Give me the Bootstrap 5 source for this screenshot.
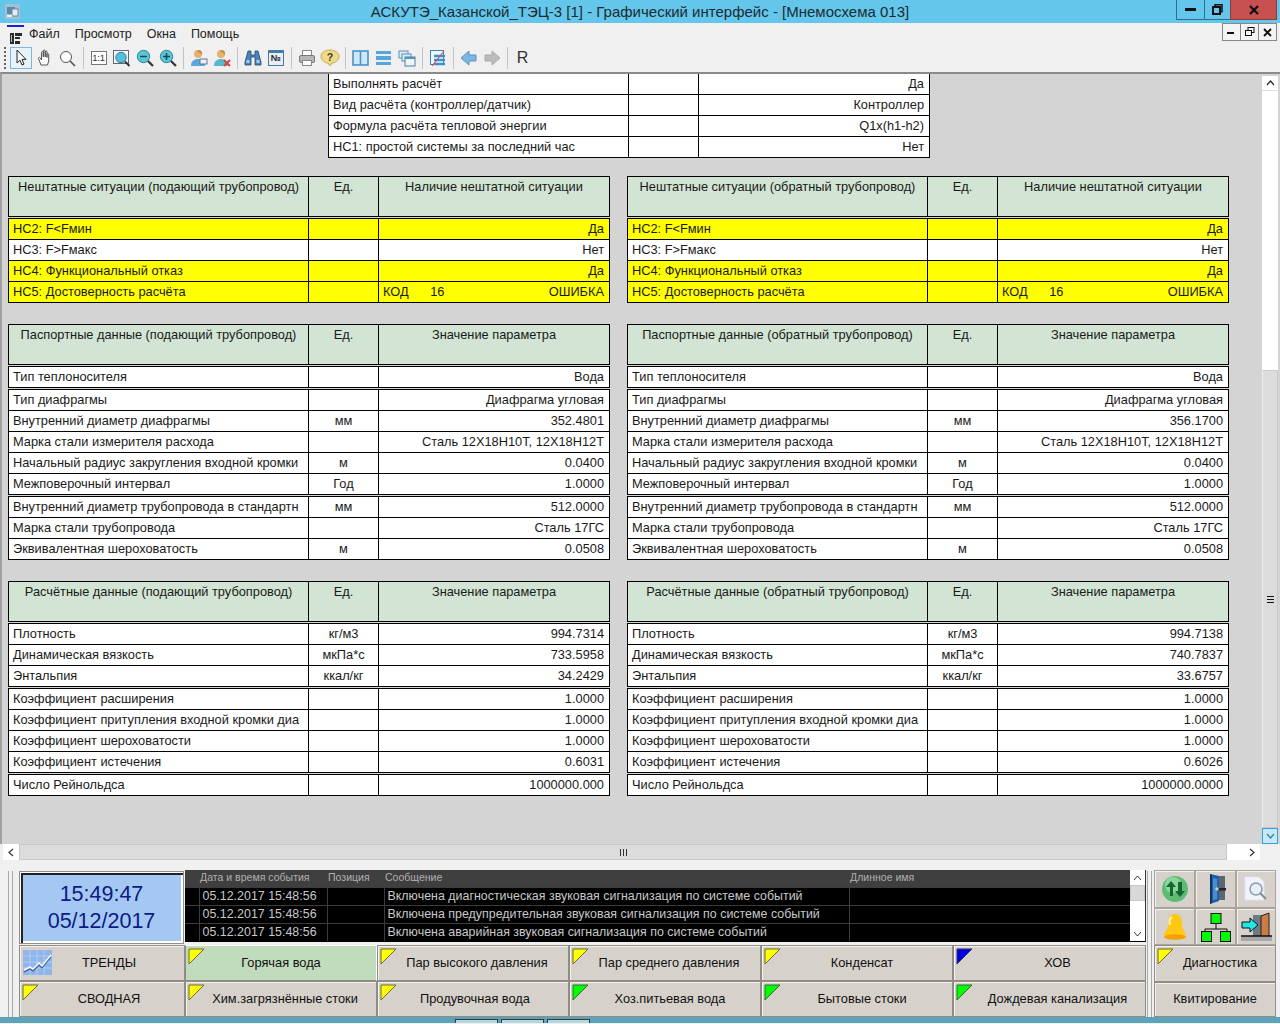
<!DOCTYPE html>
<html lang="ru"><head><meta charset="utf-8"><title>АСКУТЭ</title>
<link rel="stylesheet" href="https://cdn.jsdelivr.net/npm/bootstrap@5.3.0/dist/css/bootstrap.min.css">
<style>
html,body{margin:0;height:1024px;overflow:hidden;background:#f0f0f0;font-family:"Liberation Sans",Arial,sans-serif;color:#111}
.titlebar{height:23px;background:#63c6ea;position:relative;font-size:15px;line-height:23px;text-align:center;color:#1c2b33}
.appicon{position:absolute;left:4px;top:3px}
.capbtns{position:absolute;top:0;right:3px;display:flex;height:20px}
.capbtns div{border:1px solid #2c6f8a;border-top:0;display:flex;align-items:center;justify-content:center;margin-left:-1px}
.cap-min{width:29px}.cap-res{width:27px}.cap-close{width:47px;background:#c75050;border-color:#8d3a3a!important}
.menubar{height:21px;font-size:12.5px;position:relative;line-height:20px}
.menu-ico{width:17px;margin:0 5px 0 7px;border-top:2px solid #1f1fd8;height:18px;margin-top:1px;padding-left:2px}
.menu-item{margin-right:15px;color:#222}
.mdibtns{position:absolute;right:3px;top:0;display:flex}
.mdibtns div{width:19px;height:18px;border:1px solid #888;background:#f4f4f4;margin-left:-1px;display:flex;align-items:center;justify-content:center}
.toolbar{height:28px;padding-left:4px;align-items:center}
.grip{width:5px;height:22px;margin-right:1px;border-left:2px dotted #666}
.tb{width:23px;height:22px;display:flex;align-items:center;justify-content:center;flex:none}
.tb.on{width:22px;margin-right:1px;border:1px solid #7fb6e0;background:#e8f4fb}
.sep{width:8px;height:22px;position:relative;flex:none}
.sep::after{content:"";display:block;width:1px;height:22px;margin-left:4px;background:#c4c4c4}
.tb-r{font-size:16px;color:#333}
.box11{font-size:9.5px;line-height:12px;border:1px solid #777;width:16px;height:14px;text-align:center;background:#fff;color:#333;letter-spacing:-.3px}
.no-box{font-size:9px;line-height:10px;border:1px solid #4a78a8;border-top:3px solid #4a78a8;width:16px;height:16px;text-align:center;background:#e7eef5;color:#223;font-weight:700}
.work{height:772px;border-top:2px solid #8a8a8a;border-left:2px solid #a0a0a0;background:#d4d4d4;overflow:hidden;position:relative;display:flex}
.canvas{width:1260px;flex:none;padding-left:6px;overflow:hidden}
.vbar{width:16px;height:100%;flex:none;display:flex;flex-direction:column;margin-top:2px}
.vup{height:15px;background:#fff;border-bottom:1px solid #ddd;display:flex;align-items:center;justify-content:center}
.vfree{height:279px;background:#fff}
.vthumb{flex:1;background:#dcdcdc;border:1px solid #c8c8c8;border-left-color:#eee;display:flex;align-items:center;justify-content:center;font-size:0}
.vdn{height:16px;background:#c7e8f8;border:1px solid #3c9ed6;display:flex;align-items:center;justify-content:center;margin-bottom:2px}
.bars3{width:7px;height:7px;border-top:1px solid #111;border-bottom:1px solid #111;position:relative}
.bars3::after{content:"";position:absolute;left:0;right:0;top:2px;height:1px;background:#111;box-shadow:0 0 0 #111}
.hbar{height:17px;display:flex;border-top:1px solid #a0a0a0;padding-left:3px;background:#f0f0f0;margin-top:-1px}
.hbtn{width:16px;background:#fff;display:flex;align-items:center;justify-content:center}
.hthumb{width:1208px;background:#dcdcdc;border:1px solid #c8c8c8;display:flex;align-items:center;justify-content:center}
.hfree{width:17px;background:#fff}
.bars3v{width:7px;height:7px;border-left:1px solid #333;border-right:1px solid #333;position:relative}
.bars3v::after{content:"";position:absolute;top:0;bottom:0;left:2px;width:1px;background:#333}
.pair{display:flex;gap:18px}
.pair+.pair{margin-top:21px}
.top-table{margin:-1px 0 18px 320px;width:601px}
.block{width:601px;flex:none}
table.g{width:601px;table-layout:fixed;border-collapse:collapse;margin:0;font-size:12.8px;color:#1a1a1a}
table.g+table.g{margin-top:1px}
table.g>tbody>tr>td{border:1px solid #000;height:21px;padding:0 5px 0 4px;line-height:19px;background:#fff;white-space:nowrap;overflow:hidden;color:#1a1a1a;box-shadow:none}
table.g>tbody>tr>td:nth-child(2){text-align:center;padding:0}
table.g>tbody>tr>td:nth-child(3){text-align:right}
table.g.head>tbody>tr>td{height:40px;background:#d2e4d3;text-align:center!important;padding:0;font-size:12.8px}
table.g>tbody>tr.warn>td{background:#ff0}
.c1{width:300px}.c2{width:70px}.c3{width:231px}
.kod{display:flex;justify-content:space-between}
.kod b{font-weight:400;word-spacing:18px}
.bottom{height:157px;display:flex;padding-top:10px;background:#f0f0f0}
.gr2{width:7px;height:146px;border-left:1px solid #a8a8a8;border-right:1px solid #a8a8a8;flex:none}
.gr-l{margin:1px 6px 0 8px;width:5px}
.gr-r{margin:1px 2px 0 1px;width:5px}
.mid{width:1127px;flex:none}
.toprow{height:75px;display:flex}
.clock{width:165px;height:73px;margin:1px 1px 0 0;border:1px solid #8f8f8f;background:#a5c8f2;box-shadow:inset 1px 1px 0 #fff,inset 3px 3px 0 #222,inset -2px -2px 0 #fff;color:#0b1a84;font-size:21.5px;text-align:center;line-height:27px;padding-top:9px}
.events{width:961px;height:72px;background:#000;position:relative;overflow:hidden}
.ev-scroll{position:absolute;right:0;top:0;width:16px;height:72px;display:flex;flex-direction:column;background:#fff;border-bottom:1px solid #000;border-right:1px solid #333}
.ev-scroll .u{height:15px;display:flex;align-items:center;justify-content:center;background:#fff}
.ev-scroll .t{height:16px;background:#d8d8d8;border:1px solid #c8c8c8}
.ev-scroll .f{height:25px}
table.ev{width:945px;table-layout:fixed;border-collapse:collapse;margin:0;font-size:12.4px;letter-spacing:.02px}
table.ev>tbody>tr>td{background:#000;color:#c9c9c9;height:18px;padding:0 0 0 3px;border:0;border-left:1px solid #3c3c3c;border-top:1px solid #3c3c3c;line-height:16px;white-space:nowrap;overflow:hidden;box-shadow:none}
table.ev>tbody>tr>td:first-child{border-left:0}
table.ev>tbody>tr.h>td{background:#3f3f3f;color:#b0b0b0;font-size:10.5px;height:17px;border:0;padding-left:1px;line-height:14px}
.btn.pb{--bs-btn-padding-y:0;--bs-btn-padding-x:0;--bs-btn-border-radius:0;--bs-btn-font-size:12.8px;position:relative;background:#d6d2cb;color:#111;border:1px solid #8f8c86;border-radius:0;box-shadow:inset 1px 1px 0 #f4f2ee;display:flex;align-items:center;justify-content:center;font-family:inherit;line-height:1;white-space:nowrap}
.btn.pb.act{background:#c1dbbd;box-shadow:none;border-color:#fff #fff #8f8c86 #8f8c86}
.s2{padding-left:4px!important}.s4{padding-left:8px!important}.s10{padding-left:10px!important}.s14{padding-left:14px!important}.s16{padding-left:16px!important}
.pb-grid{display:grid;grid-template-columns:166px 192px 192px 192px 192px 193px;grid-template-rows:36px 36px;margin-top:0}
.tri{position:absolute;left:2px;top:2px}
.trend{position:absolute;left:3px;top:4px}
.right{width:122px;flex:none}
.ic-grid{display:grid;grid-template-columns:41px 41px 40px;grid-template-rows:38px 37px}
.ic{background:#d6d2cb;border:1px solid #a8a59f;box-shadow:inset 1px 1px 0 #f4f2ee;display:flex;align-items:center;justify-content:center}
.r-btns{display:grid;grid-template-rows:37px 35px}
.taskbar{height:6px;background:#5da3b8;display:flex;padding:2px 0 0 455px;gap:3px}
.taskbar div{width:43px;height:4px;background:#b7d6de;border:1px solid #2e3e44;border-bottom:0}
</style></head><body>
<div class="titlebar">
<svg class="appicon" width="17" height="17" viewBox="0 0 17 17"><rect x="1" y="1" width="15" height="15" fill="#9fc3d6"/><rect x="3" y="4" width="8" height="7" fill="#5c87a8"/><rect x="8" y="6" width="6" height="7" fill="#e4eef2" stroke="#6b8aa0"/><rect x="3" y="12" width="5" height="2" fill="#eef4f6"/></svg>
АСКУТЭ_Казанской_ТЭЦ-3 [1] - Графический интерфейс - [Мнемосхема 013]
<div class="capbtns">
<div class="cap-min"><svg width="11" height="5"><rect y="1" width="11" height="3" fill="#111"/></svg></div>
<div class="cap-res"><svg width="11" height="11"><rect x="3" y=".75" width="7" height="7" fill="none" stroke="#111" stroke-width="1.5"/><rect x="1" y="3" width="7" height="7" fill="#63c6ea" stroke="#111" stroke-width="2"/></svg></div>
<div class="cap-close"><svg width="10" height="10"><path d="M1 1l8 8M9 1l-8 8" stroke="#111" stroke-width="2.4"/></svg></div>
</div></div>

<div class="menubar d-flex align-items-center">
<div class="menu-ico"><svg width="14" height="14" viewBox="0 0 14 14"><path d="M1 2h4v11H1zM6 2h7v3H6zM6 6h5v2H6zM6 10h5v3H6z" fill="#2a2a2a"/><path d="M2.5 4v7" stroke="#bbb"/></svg></div>
<span class="menu-item">Файл</span><span class="menu-item">Просмотр</span><span class="menu-item">Окна</span><span class="menu-item">Помощь</span>
<div class="mdibtns">
<div><svg width="9" height="5"><rect y="2" width="7" height="2" fill="#111"/></svg></div>
<div><svg width="10" height="10"><rect x="3" y=".5" width="6" height="5" fill="none" stroke="#111"/><rect x=".5" y="3.5" width="6" height="5" fill="#f4f4f4" stroke="#111"/></svg></div>
<div><svg width="9" height="9"><path d="M1 1l7 7M8 1l-7 7" stroke="#111" stroke-width="1.8"/></svg></div>
</div></div>

<div class="toolbar d-flex">
<div class="grip"></div>
<div class="tb on"><svg width="14" height="18" viewBox="0 0 14 18"><path d="M3 1v13l3-2.8 2 4.8 2-.9-2-4.700h4z" fill="#fff" stroke="#222"/></svg></div>
<div class="tb"><svg width="16" height="18" viewBox="0 0 16 18"><path d="M4 16L1.500 9.500c-.3-1.200 1.200-1.500 1.800-.5L4.500 11V3.500c0-1.300 1.800-1.300 1.800 0V8V2c0-1.300 1.900-1.300 1.900 0v6-5c0-1.300 1.800-1.300 1.800 0v5.500-3c0-1.200 1.700-1.200 1.700 0V12l-1.200 4z" fill="#fff" stroke="#444" stroke-width=".9"/></svg></div>
<div class="tb"><svg width="17" height="17" viewBox="0 0 17 17"><circle cx="7" cy="7" r="5.500" fill="#fff" stroke="#555"/><path d="M11 11l5 5" stroke="#555" stroke-width="1.700"/></svg></div>
<div class="sep"></div>
<div class="tb"><div class="box11">1:1</div></div>
<div class="tb"><svg width="18" height="17" viewBox="0 0 18 17"><rect x=".5" y=".5" width="15" height="13" fill="#f4f8fb" stroke="#667"/><circle cx="8" cy="7.500" r="5.200" fill="#55c0dc" stroke="#2e7f98"/><path d="M12 11.500l4.500 4.500" stroke="#333" stroke-width="2"/></svg></div>
<div class="tb"><svg width="18" height="18" viewBox="0 0 18 18"><circle cx="7.500" cy="7.500" r="6.200" fill="#5cc3d8" stroke="#2b8a9a"/><path d="M4 7.500h7" stroke="#124a58" stroke-width="1.500"/><path d="M12 12l5 5" stroke="#333" stroke-width="2.200"/></svg></div>
<div class="tb"><svg width="18" height="18" viewBox="0 0 18 18"><circle cx="7.500" cy="7.500" r="6.200" fill="#5cc3d8" stroke="#2b8a9a"/><path d="M4 7.500h7M7.500 4v7" stroke="#124a58" stroke-width="1.500"/><path d="M12 12l5 5" stroke="#333" stroke-width="2.200"/></svg></div>
<div class="sep"></div>
<div class="tb"><svg width="18" height="18" viewBox="0 0 18 18"><circle cx="8" cy="5" r="4" fill="#e8b070"/><path d="M7 1.500c3-1.300 6 1 5 4-2-2-4-2-5-4z" fill="#c08a40"/><path d="M1 17c0-5 3-7 7-7s7 2 7 7z" fill="#58a8dc"/><rect x="10" y="10" width="7" height="5" fill="#eef" stroke="#678"/></svg></div>
<div class="tb"><svg width="18" height="18" viewBox="0 0 18 18"><circle cx="8" cy="5" r="4" fill="#e8b070"/><path d="M7 1.500c3-1.300 6 1 5 4-2-2-4-2-5-4z" fill="#c08a40"/><path d="M1 17c0-5 3-7 7-7s7 2 7 7z" fill="#58b8cc"/><path d="M11 11l6 6M17 11l-6 6" stroke="#cc4a3a" stroke-width="2"/></svg></div>
<div class="sep"></div>
<div class="tb"><svg width="18" height="16" viewBox="0 0 18 16"><path d="M4 1h3v4h4V1h3l3 11v3h-6V7H7v8H1v-3z" fill="#4a83b8" stroke="#23496e" stroke-width=".8"/><rect x="2.500" y="10" width="3" height="3" fill="#a8d0ee"/><rect x="12.500" y="10" width="3" height="3" fill="#a8d0ee"/></svg></div>
<div class="tb"><div class="no-box">№</div></div>
<div class="sep"></div>
<div class="tb"><svg width="18" height="18" viewBox="0 0 18 18"><rect x="4.500" y="1.500" width="9" height="6" fill="#fff" stroke="#888"/><rect x="1.500" y="6.500" width="15" height="7" rx="1.500" fill="#b4b8bc" stroke="#777"/><rect x="4.500" y="11.500" width="9" height="5" fill="#fff" stroke="#888"/></svg></div>
<div class="tb"><svg width="20" height="18" viewBox="0 0 20 18"><path d="M10 1c5 0 9 2.500 9 6.500S15 14 12 14l-2 3-2-3c-3 0-7-2.500-7-6.500S5 1 10 1z" fill="#f1d98a" stroke="#c7a95a"/><text x="10" y="11.500" font-size="10.500" font-weight="700" text-anchor="middle" fill="#3d3d28" font-family="Liberation Sans">?</text></svg></div>
<div class="sep"></div>
<div class="tb"><svg width="17" height="16" viewBox="0 0 17 16"><rect x="1" y="1" width="15" height="14" fill="#cfe6f6" stroke="#4a93c8" stroke-width="1.600"/><path d="M8.500 1v14" stroke="#4a93c8" stroke-width="1.600"/></svg></div>
<div class="tb"><svg width="17" height="16" viewBox="0 0 17 16"><rect x="1" y="1" width="15" height="3" fill="#5ba4d6"/><rect x="1" y="6" width="15" height="4" fill="#5ba4d6"/><rect x="1" y="12" width="15" height="3" fill="#5ba4d6"/><rect x="1" y="4" width="15" height="2" fill="#e4f1fa"/><rect x="1" y="10" width="15" height="2" fill="#e4f1fa"/></svg></div>
<div class="tb"><svg width="18" height="17" viewBox="0 0 18 17"><rect x="1" y="1" width="9" height="7" fill="#dcecf6" stroke="#5a8fb8"/><rect x="4" y="4" width="9" height="7" fill="#dcecf6" stroke="#5a8fb8"/><rect x="7" y="7" width="10" height="9" fill="#eef6fb" stroke="#4a7fa8"/><rect x="7" y="7" width="10" height="2" fill="#5a8fb8"/></svg></div>
<div class="sep"></div>
<div class="tb"><svg width="18" height="18" viewBox="0 0 18 18"><rect x="1.500" y="1.500" width="13" height="14" fill="#eef6fb" stroke="#4a7fa8"/><path d="M5 7h11M5 11h11M5 15h11" stroke="#3c8fd0" stroke-width="2.400"/><path d="M3 17L15 2" stroke="#c65a4a" stroke-width="1.200"/></svg></div>
<div class="sep"></div>
<div class="tb"><svg width="18" height="16" viewBox="0 0 18 16"><path d="M9 1L1 8l8 7v-4h7V5H9z" fill="#7cb6e4" stroke="#5a93c4"/></svg></div>
<div class="tb"><svg width="18" height="16" viewBox="0 0 18 16"><path d="M9 1l8 7-8 7v-4H2V5h7z" fill="#bcbcb8" stroke="#a8a8a4"/></svg></div>
<div class="sep"></div>
<div class="tb tb-r">R</div>
</div>

<div class="work">
<div class="canvas">
<div class="top-table"><table class="g table"><colgroup><col class="c1"><col class="c2"><col class="c3"></colgroup><tbody>
<tr><td>Выполнять расчёт</td><td></td><td>Да</td></tr>
<tr><td>Вид расчёта (контроллер/датчик)</td><td></td><td>Контроллер</td></tr>
<tr><td>Формула расчёта тепловой энергии</td><td></td><td>Q1x(h1-h2)</td></tr>
<tr><td>НС1: простой системы за последний час</td><td></td><td>Нет</td></tr>
</tbody></table></div>

<div class="pair">
<div class="block">
<table class="g head table"><colgroup><col class="c1"><col class="c2"><col class="c3"></colgroup><tbody><tr><td>Нештатные ситуации (подающий трубопровод)</td><td>Ед.</td><td>Наличие нештатной ситуации</td></tr></tbody></table>
<table class="g table"><colgroup><col class="c1"><col class="c2"><col class="c3"></colgroup><tbody>
<tr class="warn"><td>НС2: F&lt;Fмин</td><td></td><td>Да</td></tr>
<tr><td>НС3: F&gt;Fмакс</td><td></td><td>Нет</td></tr>
<tr class="warn"><td>НС4: Функциональный отказ</td><td></td><td>Да</td></tr>
<tr class="warn"><td>НС5: Достоверность расчёта</td><td></td><td><div class="kod"><b>КОД 16</b><span>ОШИБКА</span></div></td></tr>
</tbody></table>
</div>
<div class="block">
<table class="g head table"><colgroup><col class="c1"><col class="c2"><col class="c3"></colgroup><tbody><tr><td>Нештатные ситуации (обратный трубопровод)</td><td>Ед.</td><td>Наличие нештатной ситуации</td></tr></tbody></table>
<table class="g table"><colgroup><col class="c1"><col class="c2"><col class="c3"></colgroup><tbody>
<tr class="warn"><td>НС2: F&lt;Fмин</td><td></td><td>Да</td></tr>
<tr><td>НС3: F&gt;Fмакс</td><td></td><td>Нет</td></tr>
<tr class="warn"><td>НС4: Функциональный отказ</td><td></td><td>Да</td></tr>
<tr class="warn"><td>НС5: Достоверность расчёта</td><td></td><td><div class="kod"><b>КОД 16</b><span>ОШИБКА</span></div></td></tr>
</tbody></table>
</div>
</div>

<div class="pair">
<div class="block">
<table class="g head table"><colgroup><col class="c1"><col class="c2"><col class="c3"></colgroup><tbody><tr><td>Паспортные данные (подающий трубопровод)</td><td>Ед.</td><td>Значение параметра</td></tr></tbody></table>
<table class="g table"><colgroup><col class="c1"><col class="c2"><col class="c3"></colgroup><tbody><tr><td>Тип теплоносителя</td><td></td><td>Вода</td></tr></tbody></table>
<table class="g table"><colgroup><col class="c1"><col class="c2"><col class="c3"></colgroup><tbody>
<tr><td>Тип диафрагмы</td><td></td><td>Диафрагма угловая</td></tr>
<tr><td>Внутренний диаметр диафрагмы</td><td>мм</td><td>352.4801</td></tr>
<tr><td>Марка стали измерителя расхода</td><td></td><td>Сталь 12Х18Н10Т, 12Х18Н12Т</td></tr>
<tr><td>Начальный радиус закругления входной кромки</td><td>м</td><td>0.0400</td></tr>
<tr><td>Межповерочный интервал</td><td>Год</td><td>1.0000</td></tr>
</tbody></table>
<table class="g table"><colgroup><col class="c1"><col class="c2"><col class="c3"></colgroup><tbody>
<tr><td>Внутренний диаметр трубопровода в стандартн</td><td>мм</td><td>512.0000</td></tr>
<tr><td>Марка стали трубопровода</td><td></td><td>Сталь 17ГС</td></tr>
<tr><td>Эквивалентная шероховатость</td><td>м</td><td>0.0508</td></tr>
</tbody></table>
</div>
<div class="block">
<table class="g head table"><colgroup><col class="c1"><col class="c2"><col class="c3"></colgroup><tbody><tr><td>Паспортные данные (обратный трубопровод)</td><td>Ед.</td><td>Значение параметра</td></tr></tbody></table>
<table class="g table"><colgroup><col class="c1"><col class="c2"><col class="c3"></colgroup><tbody><tr><td>Тип теплоносителя</td><td></td><td>Вода</td></tr></tbody></table>
<table class="g table"><colgroup><col class="c1"><col class="c2"><col class="c3"></colgroup><tbody>
<tr><td>Тип диафрагмы</td><td></td><td>Диафрагма угловая</td></tr>
<tr><td>Внутренний диаметр диафрагмы</td><td>мм</td><td>356.1700</td></tr>
<tr><td>Марка стали измерителя расхода</td><td></td><td>Сталь 12Х18Н10Т, 12Х18Н12Т</td></tr>
<tr><td>Начальный радиус закругления входной кромки</td><td>м</td><td>0.0400</td></tr>
<tr><td>Межповерочный интервал</td><td>Год</td><td>1.0000</td></tr>
</tbody></table>
<table class="g table"><colgroup><col class="c1"><col class="c2"><col class="c3"></colgroup><tbody>
<tr><td>Внутренний диаметр трубопровода в стандартн</td><td>мм</td><td>512.0000</td></tr>
<tr><td>Марка стали трубопровода</td><td></td><td>Сталь 17ГС</td></tr>
<tr><td>Эквивалентная шероховатость</td><td>м</td><td>0.0508</td></tr>
</tbody></table>
</div>
</div>

<div class="pair">
<div class="block">
<table class="g head table"><colgroup><col class="c1"><col class="c2"><col class="c3"></colgroup><tbody><tr><td>Расчётные данные (подающий трубопровод)</td><td>Ед.</td><td>Значение параметра</td></tr></tbody></table>
<table class="g table"><colgroup><col class="c1"><col class="c2"><col class="c3"></colgroup><tbody>
<tr><td>Плотность</td><td>кг/м3</td><td>994.7314</td></tr>
<tr><td>Динамическая вязкость</td><td>мкПа*с</td><td>733.5958</td></tr>
<tr><td>Энтальпия</td><td>ккал/кг</td><td>34.2429</td></tr>
</tbody></table>
<table class="g table"><colgroup><col class="c1"><col class="c2"><col class="c3"></colgroup><tbody>
<tr><td>Коэффициент расширения</td><td></td><td>1.0000</td></tr>
<tr><td>Коэффициент притупления входной кромки диа</td><td></td><td>1.0000</td></tr>
<tr><td>Коэффициент шероховатости</td><td></td><td>1.0000</td></tr>
<tr><td>Коэффициент истечения</td><td></td><td>0.6031</td></tr>
</tbody></table>
<table class="g table"><colgroup><col class="c1"><col class="c2"><col class="c3"></colgroup><tbody><tr><td>Число Рейнольдса</td><td></td><td>1000000.000</td></tr></tbody></table>
</div>
<div class="block">
<table class="g head table"><colgroup><col class="c1"><col class="c2"><col class="c3"></colgroup><tbody><tr><td>Расчётные данные (обратный трубопровод)</td><td>Ед.</td><td>Значение параметра</td></tr></tbody></table>
<table class="g table"><colgroup><col class="c1"><col class="c2"><col class="c3"></colgroup><tbody>
<tr><td>Плотность</td><td>кг/м3</td><td>994.7138</td></tr>
<tr><td>Динамическая вязкость</td><td>мкПа*с</td><td>740.7837</td></tr>
<tr><td>Энтальпия</td><td>ккал/кг</td><td>33.6757</td></tr>
</tbody></table>
<table class="g table"><colgroup><col class="c1"><col class="c2"><col class="c3"></colgroup><tbody>
<tr><td>Коэффициент расширения</td><td></td><td>1.0000</td></tr>
<tr><td>Коэффициент притупления входной кромки диа</td><td></td><td>1.0000</td></tr>
<tr><td>Коэффициент шероховатости</td><td></td><td>1.0000</td></tr>
<tr><td>Коэффициент истечения</td><td></td><td>0.6026</td></tr>
</tbody></table>
<table class="g table"><colgroup><col class="c1"><col class="c2"><col class="c3"></colgroup><tbody><tr><td>Число Рейнольдса</td><td></td><td>1000000.0000</td></tr></tbody></table>
</div>
</div>
</div>
<div class="vbar">
<div class="vup"><svg width="9" height="6"><path d="M1 5l3.500-4L8 5" fill="none" stroke="#222" stroke-width="1.200"/></svg></div>
<div class="vfree"></div>
<div class="vthumb"><div class="bars3"></div></div>
<div class="vdn"><svg width="9" height="6"><path d="M1 1l3.500 4L8 1" fill="none" stroke="#2a7fb0" stroke-width="1.200"/></svg></div>
</div>
</div>

<div class="hbar">
<div class="hbtn"><svg width="6" height="9"><path d="M5 1L1 4.500 5 8" fill="none" stroke="#333" stroke-width="1.200"/></svg></div>
<div class="hthumb"><div class="bars3v"></div></div>
<div class="hfree"></div>
<div class="hbtn"><svg width="6" height="9"><path d="M1 1l4 3.500L1 8" fill="none" stroke="#333" stroke-width="1.200"/></svg></div>
</div>

<div class="bottom">
<div class="gr2 gr-l"></div>
<div class="mid">
<div class="toprow">
<div class="clock">15:49:47<br>05/12/2017</div>
<div class="events">
<table class="ev table"><colgroup><col style="width:14px"><col style="width:128px"><col style="width:57px"><col style="width:465px"><col></colgroup><tbody>
<tr class="h"><td></td><td>Дата и время события</td><td>Позиция</td><td>Сообщение</td><td>Длинное имя</td></tr>
<tr><td></td><td>05.12.2017 15:48:56</td><td></td><td>Включена диагностическая звуковая сигнализация по системе событий</td><td></td></tr>
<tr><td></td><td>05.12.2017 15:48:56</td><td></td><td>Включена предупредительная звуковая сигнализация по системе событий</td><td></td></tr>
<tr><td></td><td>05.12.2017 15:48:56</td><td></td><td>Включена аварийная звуковая сигнализация по системе событий</td><td></td></tr>
</tbody></table>
<div class="ev-scroll">
<div class="u"><svg width="9" height="6"><path d="M1 5l3.500-4L8 5" fill="none" stroke="#333"/></svg></div>
<div class="t"></div><div class="f"></div>
<div class="u"><svg width="9" height="6"><path d="M1 1l3.500 4L8 1" fill="none" stroke="#333"/></svg></div>
</div>
</div>
</div>
<div class="pb-grid">
<button class="btn pb s14"><svg class="trend" width="29" height="25" viewBox="0 0 29 25"><rect width="29" height="25" fill="#8fb5ea"/><path d="M0 6h29M0 12h29M0 18h29M7 0v25M14 0v25M21 0v25" stroke="#b9d2f3" stroke-width=".8"/><path d="M1 20l6-3 3 2 6-6 3 3 9-11" fill="none" stroke="#fff" stroke-width="1.400"/><path d="M1 22l6-3 3 2 6-6 3 3 9-11" fill="none" stroke="#3f5f9a" stroke-width="1.100"/></svg>ТРЕНДЫ</button>
<button class="btn pb act"><svg class="tri" width="17" height="17"><polygon points="1,1 16,1 1,16" fill="#ff0" stroke="#6b6b30"/></svg>Горячая вода</button>
<button class="btn pb s4"><svg class="tri" width="17" height="17"><polygon points="1,1 16,1 1,16" fill="#ff0" stroke="#6b6b30"/></svg>Пар высокого давления</button>
<button class="btn pb s4"><svg class="tri" width="17" height="17"><polygon points="1,1 16,1 1,16" fill="#ff0" stroke="#6b6b30"/></svg>Пар среднего давления</button>
<button class="btn pb s10"><svg class="tri" width="17" height="17"><polygon points="1,1 16,1 1,16" fill="#ff0" stroke="#6b6b30"/></svg>Конденсат</button>
<button class="btn pb s16"><svg class="tri" width="17" height="17"><polygon points="1,1 16,1 1,16" fill="#0000e0" stroke="#30306b"/></svg>ХОВ</button>
<button class="btn pb s14"><svg class="tri" width="17" height="17"><polygon points="1,1 16,1 1,16" fill="#ff0" stroke="#6b6b30"/></svg>СВОДНАЯ</button>
<button class="btn pb s4"><svg class="tri" width="17" height="17"><polygon points="1,1 16,1 1,16" fill="#ff0" stroke="#6b6b30"/></svg>Хим.загрязнённые стоки</button>
<button class="btn pb s2"><svg class="tri" width="17" height="17"><polygon points="1,1 16,1 1,16" fill="#ff0" stroke="#6b6b30"/></svg>Продувочная вода</button>
<button class="btn pb s10"><svg class="tri" width="17" height="17"><polygon points="1,1 16,1 1,16" fill="#0f0" stroke="#306b30"/></svg>Хоз.питьевая вода</button>
<button class="btn pb s10"><svg class="tri" width="17" height="17"><polygon points="1,1 16,1 1,16" fill="#0f0" stroke="#306b30"/></svg>Бытовые стоки</button>
<button class="btn pb s16"><svg class="tri" width="17" height="17"><polygon points="1,1 16,1 1,16" fill="#0f0" stroke="#306b30"/></svg>Дождевая канализация</button>
</div>
</div>
<div class="gr2 gr-r"></div>
<div class="right">
<div class="ic-grid">
<div class="ic"><svg width="28" height="28" viewBox="0 0 28 28"><circle cx="14" cy="14" r="13" fill="#5dbb74"/><circle cx="12" cy="10" r="8" fill="#8ad69b"/><path d="M9 21V12H5l5-6 5 6h-3v9zM17 7v9h-3l5 6 5-6h-3V7z" fill="#16662e"/></svg></div>
<div class="ic"><svg width="30" height="32" viewBox="0 0 30 32"><path d="M9 1l9 2v25l-9 3z" fill="#1e5fa8"/><path d="M9 1l2 1v28l-2 1z" fill="#0c3460"/><path d="M18 3h6v24h-6z" fill="#5a6670"/><path d="M12 5l4 1v20l-4 1z" fill="#4a8cd0"/><rect x="15" y="15" width="10" height="2.500" fill="#222"/><circle cx="16" cy="16" r="1.800" fill="#ccc"/></svg></div>
<div class="ic"><svg width="28" height="30" viewBox="0 0 28 30"><path d="M3 3h14l5 5v18H3z" fill="#f0f4fa" stroke="#dfe4ee"/><circle cx="14" cy="15" r="6" fill="#e6eef6" stroke="#8a9aac" stroke-width="1.500"/><path d="M18 19l6 6" stroke="#8a8a8a" stroke-width="2"/></svg></div>
<div class="ic"><svg width="26" height="30" viewBox="0 0 26 30"><path d="M13 2c5 0 7 4 7 9 0 6 2 8 4 11 1 2-5 3-11 3S1 24 2 22c2-3 4-5 4-11 0-5 2-9 7-9z" fill="#ffc814"/><path d="M10 5c-2 1-3 4-2 8" stroke="#ffeea0" stroke-width="2.500" fill="none"/><ellipse cx="13" cy="25" rx="11" ry="2.800" fill="#f5a000"/></svg></div>
<div class="ic"><svg width="30" height="30" viewBox="0 0 30 30"><path d="M15 12v5M4 24v-7h22v7" fill="none" stroke="#111"/><rect x="10" y="1.500" width="10" height="10" fill="#0f0" stroke="#111"/><rect x=".5" y="19.500" width="10" height="10" fill="#0f0" stroke="#111"/><rect x="19.500" y="19.500" width="10" height="10" fill="#0f0" stroke="#111"/></svg></div>
<div class="ic"><svg width="32" height="32" viewBox="0 0 32 32"><rect x="13" y="4" width="14" height="21" fill="#6f7a86"/><path d="M21 28V5l8-3v23z" fill="#cd7d44" stroke="#222"/><rect x="1" y="25" width="31" height="5" fill="#a8a8a8"/><path d="M1 25h31" stroke="#111" stroke-width="1.500"/><path d="M2 11h8V7l8 7-8 7v-4H2z" fill="#20e8e8" stroke="#111"/></svg></div>
</div>
<div class="r-btns">
<button class="btn pb s10"><svg class="tri" width="17" height="17"><polygon points="1,1 16,1 1,16" fill="#ff0" stroke="#6b6b30"/></svg>Диагностика</button>
<button class="btn pb">Квитирование</button>
</div>
</div>
</div>
<div class="taskbar"><div></div><div></div><div></div></div>
</body></html>
